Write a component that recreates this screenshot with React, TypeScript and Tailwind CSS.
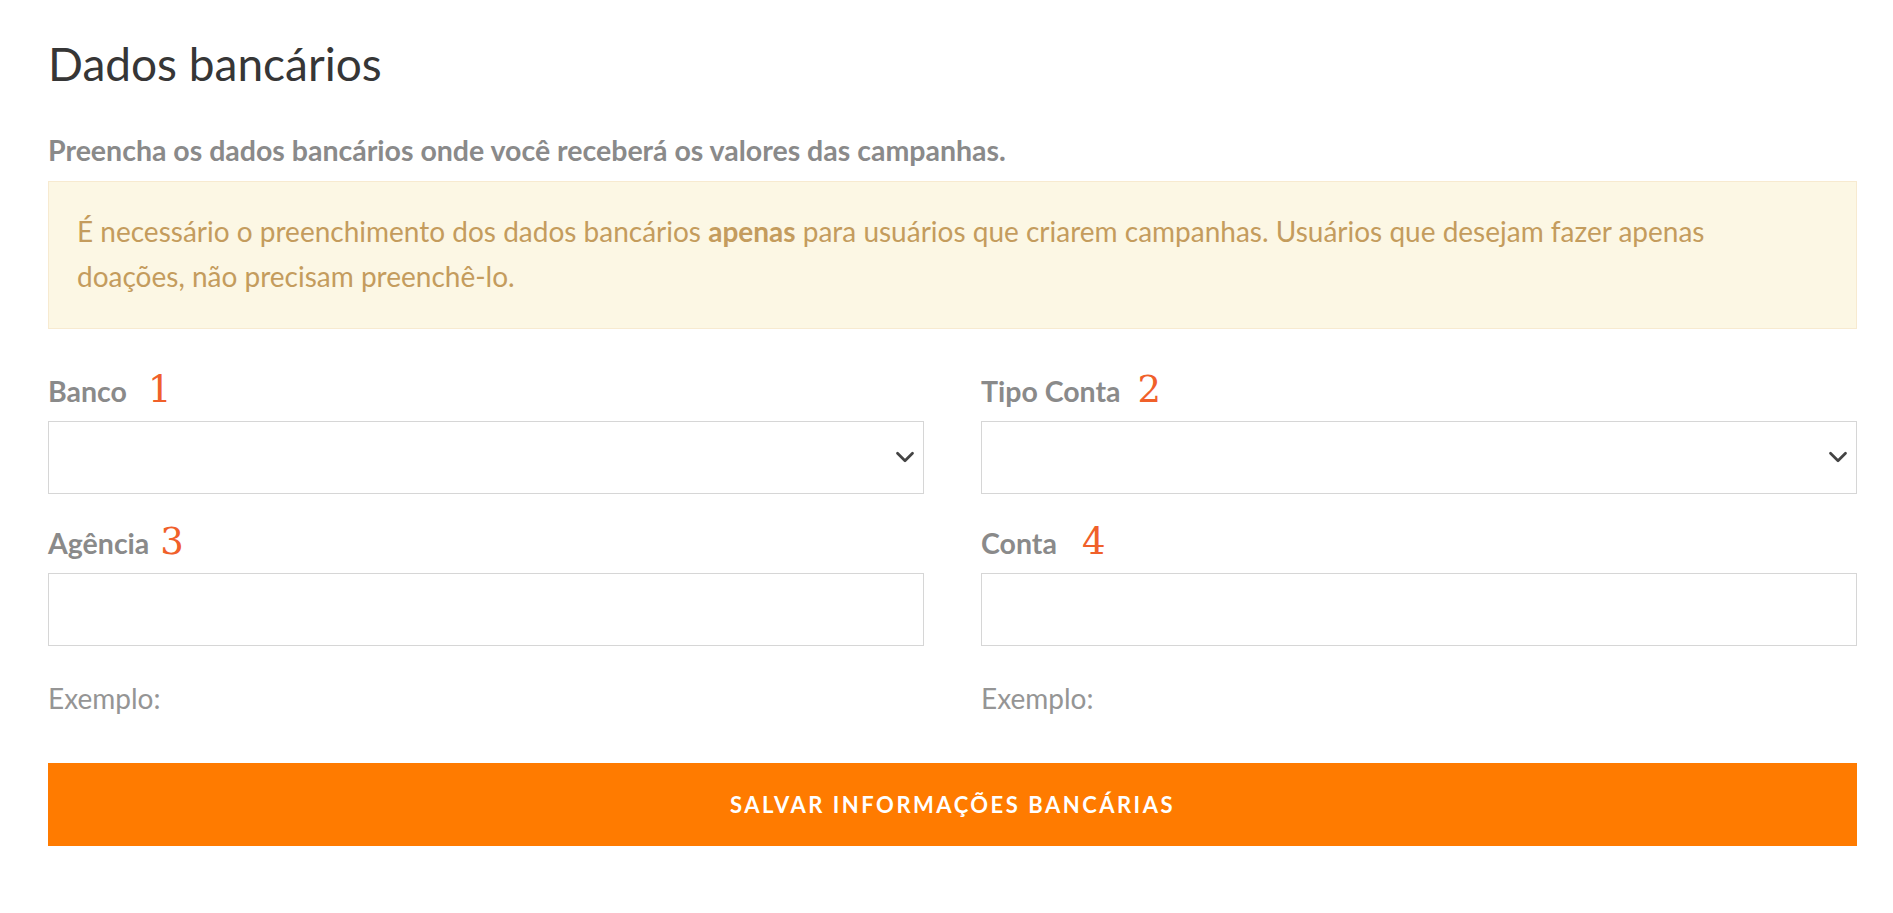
import { ChevronDown } from "lucide-react";

function FieldLabel({ text, num, gap }: { text: string; num: string; gap: string }) {
  return (
    <div className="flex items-baseline h-[39px] leading-[39px]">
      <span className="text-[28.5px] font-bold text-[#8a8a8a]">{text}</span>
      <span
        className={`${gap} text-[37px] leading-none text-[#f0602a]`}
        style={{ fontFamily: '"DejaVu Serif", "Liberation Serif", serif' }}
      >
        {num}
      </span>
    </div>
  );
}

function SelectBox() {
  return (
    <div className="mt-[11px] h-[73px] border border-[#d6d6d6] bg-white flex items-center justify-end pr-[3px]">
      <ChevronDown size={30} strokeWidth={2.2} className="text-[#444]" />
    </div>
  );
}

function InputBox() {
  return <div className="mt-[11px] h-[73px] border border-[#d6d6d6] bg-white"></div>;
}

export default function App() {
  return (
    <div
      className="min-h-screen bg-white"
      style={{ fontFamily: 'Lato, "Open Sans", sans-serif' }}
    >
      <div className="ml-[48px] w-[1809px] pt-[39px]">
        {/* Title */}
        <h1 className="text-[46px] leading-[1.1] font-normal text-[#363636]">Dados bancários</h1>
        <p className="mt-[41px] text-[28.5px] leading-[39px] font-bold text-[#8a8a8a]">
          Preencha os dados bancários onde você receberá os valores das campanhas.
        </p>

        {/* Warning */}
        <div className="mt-[11px] bg-[#fcf7e4] border border-[#f7ead0] pt-[27px] pb-[29px] pl-[28px] pr-[48px] text-[28px] leading-[45px] text-[#c49c5d]">
          É necessário o preenchimento dos dados bancários <b className="font-bold">apenas</b> para usuários que
          criarem campanhas. Usuários que desejam fazer apenas doações, não precisam preenchê-lo.
        </div>

        {/* Form */}
        <div className="mt-[42px] grid grid-cols-2 gap-x-[57px]">
          <div>
            <FieldLabel text="Banco" num="1" gap="ml-[21px]" />
            <SelectBox />
          </div>
          <div>
            <FieldLabel text="Tipo Conta" num="2" gap="ml-[17px]" />
            <SelectBox />
          </div>

          <div className="mt-[29px]">
            <FieldLabel text="Agência" num="3" gap="ml-[11px]" />
            <InputBox />
            <p className="mt-[33px] text-[28px] leading-[39px] text-[#959595]">Exemplo:</p>
          </div>
          <div className="mt-[29px]">
            <FieldLabel text="Conta" num="4" gap="ml-[25px]" />
            <InputBox />
            <p className="mt-[33px] text-[28px] leading-[39px] text-[#959595]">Exemplo:</p>
          </div>
        </div>

        <button className="mt-[45px] w-full h-[83px] bg-[#ff7b00] text-white text-[22px] font-bold uppercase tracking-[2.5px]">
          Salvar informações bancárias
        </button>
      </div>
    </div>
  );
}
